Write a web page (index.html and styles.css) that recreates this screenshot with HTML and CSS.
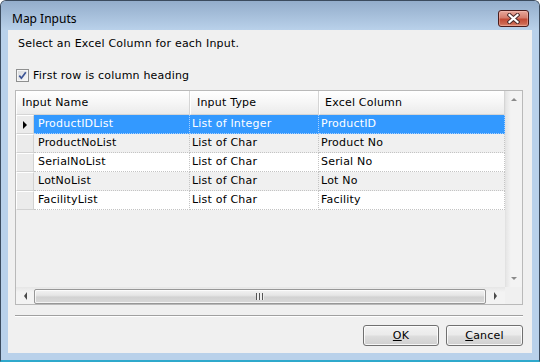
FILE: index.html
```html
<!DOCTYPE html>
<html lang="en">
<head>
    <meta charset="UTF-8">
    <title>Map Inputs</title>
    <link rel="stylesheet" href="styles.css">
</head>
<body>
    <div class="window">
        <div class="titlebar">
            <span class="title">Map Inputs</span>
            <button class="close" aria-label="Close">
                <svg width="13" height="11" viewBox="0 0 13 11">
                    <path d="M2.5 2 L10.5 9 M10.5 2 L2.5 9" stroke="#4b2a2a" stroke-width="4.2" stroke-linecap="square"/>
                    <path d="M2.5 2 L10.5 9 M10.5 2 L2.5 9" stroke="#ffffff" stroke-width="2.2" stroke-linecap="square"/>
                </svg>
            </button>
        </div>

        <div class="client">
            <p class="intro">Select an Excel Column for each Input.</p>

            <label class="check">
                <span class="box">
                    <svg width="13" height="13" viewBox="0 0 13 13">
                        <defs>
                            <linearGradient id="boxfill" x1="0" y1="0" x2="1" y2="1">
                                <stop offset="0" stop-color="#d9dbde"/>
                                <stop offset="1" stop-color="#f7f7f7"/>
                            </linearGradient>
                        </defs>
                        <rect x="0.5" y="0.5" width="12" height="12" fill="#f6f6f6" stroke="#8e8f8f"/>
                        <rect x="2" y="2" width="9" height="9" fill="url(#boxfill)"/>
                        <path d="M3.3 6.6 L5.4 9.2 L9.8 3.2" fill="none" stroke="#3d5596" stroke-width="1.7"/>
                    </svg>
                </span>
                First row is column heading
            </label>

            <div class="grid">
                <div class="grid-main">
                    <div class="head">
                        <div class="hcell h-name">Input Name</div>
                        <div class="hcell h-type">Input Type</div>
                        <div class="hcell h-col">Excel Column</div>
                    </div>

                    <div class="row selected">
                        <div class="rh"><span class="pointer"></span></div>
                        <div class="cell c-name">ProductIDList</div>
                        <div class="cell c-type">List of Integer</div>
                        <div class="cell c-col">ProductID</div>
                    </div>
                    <div class="row alt">
                        <div class="rh"></div>
                        <div class="cell c-name">ProductNoList</div>
                        <div class="cell c-type">List of Char</div>
                        <div class="cell c-col">Product No</div>
                    </div>
                    <div class="row">
                        <div class="rh"></div>
                        <div class="cell c-name">SerialNoList</div>
                        <div class="cell c-type">List of Char</div>
                        <div class="cell c-col">Serial No</div>
                    </div>
                    <div class="row alt">
                        <div class="rh"></div>
                        <div class="cell c-name">LotNoList</div>
                        <div class="cell c-type">List of Char</div>
                        <div class="cell c-col">Lot No</div>
                    </div>
                    <div class="row">
                        <div class="rh"></div>
                        <div class="cell c-name">FacilityList</div>
                        <div class="cell c-type">List of Char</div>
                        <div class="cell c-col">Facility</div>
                    </div>
                </div>

                <!-- vertical scrollbar -->
                <div class="vscroll">
                    <div class="varrow"><span class="tri-up"></span></div>
                    <div class="varrow"><span class="tri-down"></span></div>
                </div>

                <!-- horizontal scrollbar -->
                <div class="hscroll">
                    <div class="harrow left"><span class="tri-left"></span></div>
                    <div class="thumb"><span class="grip"></span></div>
                    <div class="harrow right"><span class="tri-right"></span></div>
                </div>
                <div class="corner"></div>
            </div>

            <div class="sep"></div>

            <div class="buttons">
                <button class="btn ok"><u>O</u>K</button>
                <button class="btn cancel"><u>C</u>ancel</button>
            </div>
        </div>
    </div>
</body>
</html>
```

FILE: styles.css
```css
* {
    margin: 0;
    padding: 0;
    box-sizing: border-box;
}

body {
    width: 540px;
    height: 362px;
    background: #ffffff;
    font-family: 'DejaVu Sans', Verdana, sans-serif;
    font-size: 11px;
    letter-spacing: 0.2px;
    color: #000;
    overflow: hidden;
}

.window {
    width: 540px;
    height: 362px;
    display: flex;
    flex-direction: column;
    background: #b9d1ea;
    border: 1px solid #3b4b5e;
    border-bottom: 2px solid #2fa9cc;
    border-radius: 6px 6px 0 0;
}

.titlebar {
    height: 29px;
    display: flex;
    justify-content: space-between;
    align-items: flex-start;
    padding-left: 11px;
    background: linear-gradient(#93adcb, #b9d1ea);
    border-radius: 5px 5px 0 0;
}

.title {
    font-family: 'Noto Sans', 'Open Sans', sans-serif;
    font-size: 12px;
    letter-spacing: 0;
    line-height: 16px;
    margin-top: 10px;
    color: #000;
}

.close {
    width: 31px;
    height: 17px;
    margin: 9px 10px 0 0;
    display: flex;
    align-items: center;
    justify-content: center;
    border: 1px solid #4a1c1c;
    border-radius: 3px;
    background: linear-gradient(#e8a89c 0%, #d57c6c 45%, #c24a35 55%, #cc6650 85%, #dd8a72 100%);
    box-shadow: inset 0 0 0 1px rgba(255, 210, 200, 0.35);
}

.close svg {
    display: block;
}

.client {
    flex: 1;
    margin: 0 7px 7px 7px;
    padding: 0 9px 0 7px;
    background: #f0f0f0;
    display: flex;
    flex-direction: column;
}

.intro {
    margin-top: 7px;
    padding-left: 3px;
    line-height: 14px;
}

.check {
    margin-top: 18px;
    margin-left: 1px;
    height: 13px;
    display: flex;
    align-items: center;
    gap: 4px;
    line-height: 13px;
}

.box svg {
    display: block;
}

/* data grid */
.grid {
    margin-top: 8px;
    height: 215px;
    display: grid;
    grid-template-columns: 489px 17px;
    grid-template-rows: 196px 17px;
    border: 1px solid #b9b9b9;
    background: #f0f0f0;
}

.grid-main {
    overflow: hidden;
}

.head {
    display: flex;
    height: 24px;
}

.hcell {
    height: 24px;
    line-height: 24px;
    padding-left: 5px;
    background: linear-gradient(#ffffff, #f6f6f6 50%, #ebebeb);
    border-left: 1px solid #ffffff;
    border-right: 1px solid #d5d5d5;
    border-bottom: 1px solid #d5d5d5;
}

.h-name { width: 174px; }
.h-type { width: 129px; padding-left: 6px; }
.h-col  { width: 186px; }

.row {
    display: flex;
    height: 19px;
    background: #ffffff;
}

.row.alt {
    background: #f0f0f0;
}

.rh {
    width: 18px;
    height: 19px;
    display: flex;
    align-items: center;
    padding-left: 6px;
    background: #ebebeb;
    border-top: 1px solid #ffffff;
    border-left: 1px solid #ffffff;
    border-right: 1px solid #d2d2d2;
    border-bottom: 1px solid #d2d2d2;
}

.pointer {
    width: 0;
    height: 0;
    border-left: 4px solid #000;
    border-top: 4px solid transparent;
    border-bottom: 4px solid transparent;
}

.cell {
    height: 19px;
    line-height: 18px;
    padding-left: 2px;
    white-space: nowrap;
    overflow: hidden;
    border-right: 1px dotted #c4c4c4;
    border-bottom: 1px dotted #c4c4c4;
}

.c-name { width: 156px; padding-left: 4px; }
.c-type { width: 129px; }
.c-col  { width: 186px; }

.row.selected .cell {
    background: #3399ff;
    color: #ffffff;
    border-right-color: #a8d0ff;
    border-bottom-color: #a8d0ff;
}

/* scrollbars */
.vscroll {
    display: flex;
    flex-direction: column;
    justify-content: space-between;
    background: linear-gradient(to right, #e6e6e6, #f3f3f3 30%, #f3f3f3);
    border-left: 1px solid #e2e2e2;
}

.varrow {
    height: 17px;
    display: flex;
    align-items: center;
    justify-content: center;
}

.tri-up {
    border-bottom: 3px solid #8a8a8a;
    border-left: 3px solid transparent;
    border-right: 3px solid transparent;
}

.tri-down {
    border-top: 3px solid #8a8a8a;
    border-left: 3px solid transparent;
    border-right: 3px solid transparent;
}

.hscroll {
    display: flex;
    align-items: flex-end;
    background: linear-gradient(#e6e6e6, #f3f3f3 30%, #f3f3f3);
}

.harrow {
    height: 17px;
    display: flex;
    align-items: center;
    justify-content: center;
}

.harrow.left { width: 18px; }
.harrow.right { width: 19px; }

.tri-left {
    border-right: 3px solid #4a4a4a;
    border-top: 4px solid transparent;
    border-bottom: 4px solid transparent;
}

.tri-right {
    border-left: 3px solid #4a4a4a;
    border-top: 4px solid transparent;
    border-bottom: 4px solid transparent;
}

.thumb {
    width: 452px;
    height: 15px;
    display: flex;
    align-items: center;
    justify-content: center;
    border: 1px solid #979797;
    border-radius: 2px;
    background: linear-gradient(#f3f3f3, #e6e6e6 40%, #d2d2d2 55%, #d9d9d9);
    box-shadow: inset 0 0 0 1px rgba(255, 255, 255, 0.7);
}

.grip {
    width: 8px;
    height: 7px;
    background: linear-gradient(to right,
        #555 0, #555 1px, #eee 1px, #eee 3px,
        #555 3px, #555 4px, #eee 4px, #eee 6px,
        #555 6px, #555 7px, #eee 7px);
}

.corner {
    background: #f0f0f0;
}

.sep {
    margin-top: 10px;
    height: 2px;
    border-top: 1px solid #a0a0a0;
    border-bottom: 1px solid #ffffff;
}

.buttons {
    margin-top: 8px;
    display: flex;
    justify-content: flex-end;
    gap: 7px;
}

.btn {
    height: 21px;
    font-family: 'DejaVu Sans', Verdana, sans-serif;
    font-size: 11px;
    letter-spacing: 0.2px;
    color: #000;
    border: 1px solid #707070;
    border-radius: 3px;
    background: linear-gradient(#f2f2f2, #ebebeb 45%, #dddddd 55%, #cfcfcf);
    box-shadow: inset 0 0 0 1px rgba(255, 255, 255, 0.8);
}

.btn.ok { width: 76px; }
.btn.cancel { width: 77px; }
```
